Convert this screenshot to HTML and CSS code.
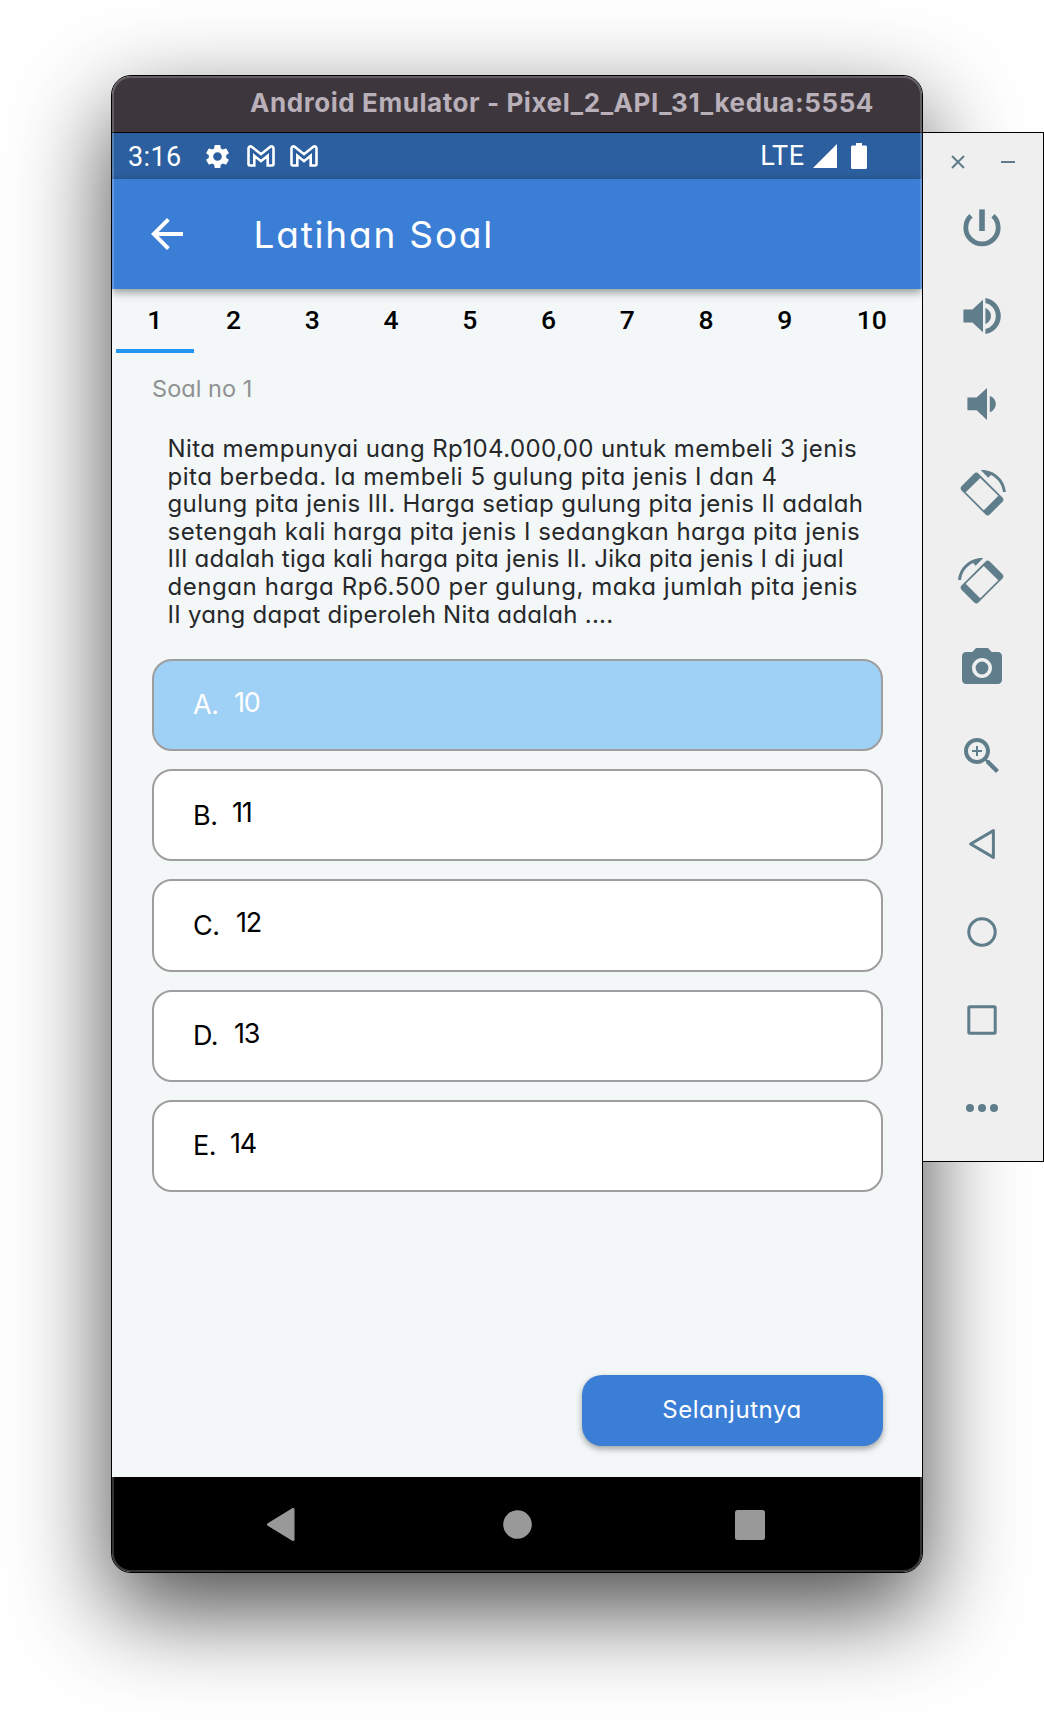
FILE: index.html
```html
<!DOCTYPE html>
<html lang="id">
<head>
<meta charset="utf-8">
<title>Latihan Soal</title>
<link rel="stylesheet" href="styles.css">
</head>
<body>
<main class="desktop">
  <section class="phone">
    <header class="titlebar">Android Emulator - Pixel_2_API_31_kedua:5554</header>
    <div class="status">
      <span class="clock">3:16</span>
      <svg class="gear" viewBox="0 0 24 24"><path d="M19.14 12.94c.04-.3.06-.61.06-.94 0-.32-.02-.64-.07-.94l2.03-1.58c.18-.14.23-.41.12-.61l-1.92-3.32c-.12-.22-.37-.29-.59-.22l-2.39.96c-.5-.38-1.03-.7-1.62-.94l-.36-2.54c-.04-.24-.24-.41-.48-.41h-3.84c-.24 0-.43.17-.47.41l-.36 2.54c-.59.24-1.13.57-1.62.94l-2.39-.96c-.22-.08-.47 0-.59.22L2.74 8.87c-.12.21-.08.47.12.61l2.03 1.58c-.05.3-.09.63-.09.94s.02.64.07.94l-2.03 1.58c-.18.14-.23.41-.12.61l1.92 3.32c.12.22.37.29.59.22l2.39-.96c.5.38 1.03.7 1.62.94l.36 2.54c.05.24.24.41.48.41h3.84c.24 0 .44-.17.47-.41l.36-2.54c.59-.24 1.13-.56 1.62-.94l2.39.96c.22.08.47 0 .59-.22l1.92-3.32c.12-.22.07-.47-.12-.61l-2.01-1.58zM12 15.6c-1.98 0-3.6-1.62-3.6-3.6s1.62-3.6 3.6-3.6 3.6 1.62 3.6 3.6-1.62 3.6-3.6 3.6z"/></svg>
      <svg class="mail" viewBox="0 0 28 22"><path d="M1.5 19V3.6C1.5 1.4 3.6.9 5 2l9 7.2L23 2c1.400-1.100 3.500-.6 3.500 1.600V19c0 .9-.6 1.500-1.500 1.500h-4.300V10.800L14 16.200l-6.700-5.400v9.700H3c-.9 0-1.500-.6-1.500-1.500z"/></svg>
      <svg class="mail" viewBox="0 0 28 22"><path d="M1.5 19V3.6C1.5 1.4 3.6.9 5 2l9 7.2L23 2c1.400-1.100 3.500-.6 3.500 1.600V19c0 .9-.6 1.500-1.500 1.500h-4.300V10.800L14 16.200l-6.700-5.400v9.700H3c-.9 0-1.500-.6-1.500-1.500z"/></svg>
      <span class="network">LTE</span>
      <svg class="signal" viewBox="0 0 24 24"><path d="M0 24H24V0z"/></svg>
      <svg class="battery" viewBox="0 0 16 26"><path d="M5 0h6v2.500h3.500c.8 0 1.500.7 1.500 1.500v20.500c0 .8-.7 1.500-1.500 1.500h-13C.7 26 0 25.300 0 24.500V4c0-.8.7-1.500 1.500-1.500H5z"/></svg>
    </div>
    <div class="appbar">
      <svg class="back" viewBox="0 0 24 24"><path d="M20 11H7.830l5.590-5.590L12 4l-8 8 8 8 1.410-1.410L7.830 13H20v-2z"/></svg>
      <h1>Latihan Soal</h1>
    </div>
    <nav class="tabs">
      <span class="tab active">1</span><span class="tab">2</span><span class="tab">3</span><span class="tab">4</span><span class="tab">5</span><span class="tab">6</span><span class="tab">7</span><span class="tab">8</span><span class="tab">9</span><span class="tab wide">10</span>
    </nav>
    <div class="content">
      <div class="label">Soal no 1</div>
      <p class="question">
        <span>Nita mempunyai uang Rp104.000,00 untuk membeli 3 jenis</span>
        <span>pita berbeda. Ia membeli 5 gulung pita jenis I dan 4</span>
        <span>gulung pita jenis III. Harga setiap gulung pita jenis II adalah</span>
        <span>setengah kali harga pita jenis I sedangkan harga pita jenis</span>
        <span>III adalah tiga kali harga pita jenis II. Jika pita jenis I di jual</span>
        <span>dengan harga Rp6.500 per gulung, maka jumlah pita jenis</span>
        <span>II yang dapat diperoleh Nita adalah ....</span>
      </p>
      <div class="options">
        <div class="option selected"><span class="key key-a">A.</span><span class="value">10</span></div>
        <div class="option"><span class="key key-b">B.</span><span class="value">11</span></div>
        <div class="option"><span class="key key-c">C.</span><span class="value">12</span></div>
        <div class="option"><span class="key key-d">D.</span><span class="value">13</span></div>
        <div class="option"><span class="key key-e">E.</span><span class="value">14</span></div>
      </div>
      <button class="next">Selanjutnya</button>
    </div>
    <footer class="navbar">
      <svg class="nav-back" viewBox="0 0 28 33"><path d="M26 1.500v30L1.500 16.500z"/></svg>
      <svg class="nav-home" viewBox="0 0 29 29"><circle cx="14.500" cy="14.500" r="14.300"/></svg>
      <svg class="nav-recent" viewBox="0 0 30 30"><rect width="30" height="30" rx="2.500"/></svg>
    </footer>
  </section>
  <aside class="tools">
    <div class="window-controls">
      <svg viewBox="0 0 14 14"><path d="M1 1l12 12M13 1L1 13"/></svg>
      <svg viewBox="0 0 14 14"><path d="M0 7h14"/></svg>
    </div>
    <div class="tool"><svg viewBox="0 0 24 24"><path class="line thick" d="M6.500 5.900a8.100 8.100 0 1 0 11 0"/><path d="M10.600 2.700h2.800v10.800h-2.800z"/></svg></div>
    <div class="tool"><svg viewBox="0 0 24 24"><path d="M2.700 8.700v6.500h4.500l5.300 4.900V3.900L7.200 8.700zM13.700 8c1.700.7 2.800 2.200 2.800 4s-1.100 3.300-2.800 4zM13.700 3v2.500c2.900.6 5.200 3.200 5.200 6.500s-2.300 5.900-5.200 6.500V21c4.300-.6 7.700-4.300 7.700-9s-3.400-8.400-7.700-9z"/></svg></div>
    <div class="tool"><svg viewBox="0 0 24 24"><path d="M4.700 8.700v6.400h4.600l5.200 4.900V4L9.300 8.700zM15.900 8c1.800.6 3 2.200 3 4s-1.200 3.500-3 4.100z"/></svg></div>
    <div class="tool rotate"><svg viewBox="0 0 24 24"><path d="M16.480 2.520c3.270 1.550 5.610 4.720 5.970 8.480h1.500C23.440 4.840 18.290 0 12 0l-.66.030 3.810 3.810 1.330-1.320z"/><path fill-rule="evenodd" d="M10.230 1.750c-.59-.59-1.540-.59-2.120 0L1.750 8.110c-.59.59-.59 1.540 0 2.120l12.020 12.020c.59.59 1.540.59 2.120 0l6.360-6.360c.59-.59.59-1.540 0-2.120zM11.100 3.950l9.050 8.950-7.250 7.250-9.050-9.050z"/></svg></div>
    <div class="tool rotate"><svg class="mirror" viewBox="0 0 24 24"><path d="M16.480 2.520c3.270 1.550 5.610 4.720 5.970 8.480h1.500C23.440 4.840 18.290 0 12 0l-.66.030 3.810 3.810 1.330-1.320z"/><path fill-rule="evenodd" d="M10.230 1.750c-.59-.59-1.540-.59-2.120 0L1.750 8.110c-.59.59-.59 1.540 0 2.120l12.020 12.020c.59.59 1.540.59 2.120 0l6.360-6.360c.59-.59.59-1.540 0-2.120zM11.100 3.950l9.050 8.950-7.250 7.250-9.050-9.050z"/></svg></div>
    <div class="tool"><svg viewBox="0 0 24 24"><circle cx="12" cy="12" r="3.200"/><path d="M9 2L7.170 4H4c-1.100 0-2 .9-2 2v12c0 1.100.9 2 2 2h16c1.100 0 2-.9 2-2V6c0-1.100-.9-2-2-2h-3.170L15 2H9zm3 15c-2.760 0-5-2.240-5-5s2.240-5 5-5 5 2.240 5 5-2.240 5-5 5z"/></svg></div>
    <div class="tool"><svg viewBox="0 0 24 24"><path d="M15.500 14h-.79l-.28-.27C15.410 12.590 16 11.110 16 9.500 16 5.910 13.090 3 9.500 3S3 5.910 3 9.500 5.910 16 9.500 16c1.610 0 3.090-.59 4.230-1.570l.27.280v.79l5 4.990L20.490 19l-4.990-5zm-6 0C7.010 14 5 11.990 5 9.500S7.010 5 9.500 5 14 7.010 14 9.500 11.990 14 9.500 14zM12 9h-2V7H9v2H7v1h2v2h1v-2h2z"/></svg></div>
    <div class="tool"><svg viewBox="0 0 24 24"><path class="line" d="M17.700 5.300v13.400L6.300 12z"/></svg></div>
    <div class="tool"><svg viewBox="0 0 24 24"><circle class="line" cx="12" cy="12" r="6.600"/></svg></div>
    <div class="tool"><svg viewBox="0 0 24 24"><rect class="line" x="5.400" y="5.400" width="13.200" height="13.200" rx=".5"/></svg></div>
    <div class="tool"><svg viewBox="0 0 24 24"><circle cx="6" cy="12" r="2"/><circle cx="12" cy="12" r="2"/><circle cx="18" cy="12" r="2"/></svg></div>
  </aside>
</main>
</body>
</html>
```
FILE: styles.css
```css
* { box-sizing: border-box; }
body { margin: 0; background: #fff; overflow: hidden; }
svg { display: block; fill: currentColor; flex: none; }

.desktop {
  display: flex;
  align-items: flex-start;
  height: 1720px;
  padding: 75px 0 0 111px;
  font-family: "Inter", "Liberation Sans", sans-serif;
  font-feature-settings: "cv11" 1;
}

.phone {
  position: relative;
  display: flex;
  flex-direction: column;
  flex: none;
  width: 812px;
  height: 1498px;
  border: 1px solid #000;
  border-radius: 20px;
  overflow: hidden;
  background: #f3f7f8;
  box-shadow: 0 36px 96px rgba(0, 0, 0, .72);
}
/* light rim along the window edge */
.phone::after {
  content: "";
  position: absolute;
  inset: 0;
  border: 2px solid rgba(255, 255, 255, .2);
  border-radius: 19px;
}

.titlebar {
  height: 57px;
  padding: 0 48px 4px 0;
  border-bottom: 1px solid #000;
  background: #3d363d;
  color: #b9b0b9;
  font-size: 26px;
  font-weight: 700;
  font-feature-settings: normal;
  line-height: 53px;
  letter-spacing: .57px;
  text-align: right;
  white-space: nowrap;
}

.status {
  display: flex;
  align-items: center;
  height: 46px;
  padding: 0 55px 0 16px;
  background: #2c5f9f;
  color: #fff;
  font: 27px/46px "Roboto", sans-serif;
}
.clock { width: 75px; padding-top: 1px; letter-spacing: .4px; }
.gear { width: 29px; height: 29px; margin-right: 14.500px; }
.mail { width: 28px; height: 22px; margin-right: 15.500px; fill: none; stroke: #fff; stroke-width: 2.600; }
.network { margin-left: auto; margin-right: 8px; letter-spacing: .8px; }
.signal { width: 24px; height: 24px; margin-right: 14px; }
.battery { width: 16px; height: 26px; }

.appbar {
  position: relative;
  display: flex;
  align-items: center;
  height: 110px;
  padding-left: 31px;
  background: #3b7ed6;
  color: #fff;
  box-shadow: 0 3px 9px rgba(0, 0, 0, .42);
}
.back { width: 48px; height: 48px; margin-right: 62.500px; }
.appbar h1 { margin: 0; font-size: 37px; font-weight: 400; letter-spacing: 1.800px; }

.tabs {
  display: flex;
  height: 64px;
  padding: 0 3.500px;
  font: 500 26.500px/63px "Roboto", sans-serif;
  text-align: center;
}
.tab { width: 78.750px; height: 64px; flex: none; line-height: 61px; }
.tab.active { border-bottom: 4px solid #2196f3; }
.tab.wide { width: 95px; }

.content {
  display: flex;
  flex-direction: column;
  flex: 1;
  padding: 22px 39.500px 31px 40px;
}
.label { color: #8f9193; font-size: 23.500px; line-height: 28px; letter-spacing: .05px; }
.question {
  margin: 32px 0 30.500px 15.500px;
  color: #26282a;
  font-size: 24px;
  line-height: 27.600px;
}
.question span { display: block; white-space: nowrap; letter-spacing: .41px; }
.question span:nth-child(2) { letter-spacing: .5px; }
.question span:nth-child(3) { letter-spacing: .38px; }
.question span:nth-child(4) { letter-spacing: .5px; }
.question span:nth-child(5) { letter-spacing: .25px; }
.question span:nth-child(6) { letter-spacing: .56px; }
.question span:nth-child(7) { letter-spacing: .26px; }

.options { display: flex; flex-direction: column; gap: 18px; }
.option {
  display: flex;
  align-items: center;
  height: 92.300px;
  flex: none;
  padding-left: 39px;
  border: 2px solid #9e9e9e;
  border-radius: 20px;
  background: #fff;
  color: #000;
  font-size: 27px;
}
.option.selected { background: #9fd0f6; color: #fff; }
.key { width: 41px; letter-spacing: -.5px; }
.key-b { width: 39px; }
.key-c { width: 43px; }
.key-e { width: 37px; }
.value { margin-bottom: 5px; letter-spacing: -1.200px; }

.next {
  width: 301px;
  height: 71px;
  flex: none;
  margin: auto 0 0 auto;
  padding: 0 0 2px;
  border: 0;
  border-radius: 20px;
  background: #3b7ed6;
  box-shadow: 0 3px 6px rgba(0, 0, 0, .35);
  color: #fff;
  font: 400 24px "Inter", sans-serif;
  font-feature-settings: "cv11" 1;
  letter-spacing: .55px;
}

.navbar {
  display: flex;
  align-items: center;
  height: 95px;
  padding: 0 157px 0 155px;
  justify-content: space-between;
  background: #000;
  color: #999;
}
.nav-back { width: 28px; height: 33px; stroke: #999; stroke-width: 3; stroke-linejoin: round; }
.nav-home { width: 29px; height: 29px; margin-left: 4px; }
.nav-recent { width: 30px; height: 30px; }

.tools {
  position: relative;
  flex: none;
  width: 121px;
  height: 1030px;
  margin-top: 57px;
  border: 1px solid #000;
  border-left: 0;
  background: #efefef;
  color: #607d8b;
}
.window-controls {
  display: flex;
  gap: 36px;
  height: 51px;
  padding: 22px 0 0 28px;
}
.window-controls svg { width: 14px; height: 14px; fill: none; stroke: currentColor; stroke-width: 2; }
.tool { display: flex; align-items: center; height: 88px; padding-left: 35px; }
.tool.rotate { padding-top: 3px; }
.tool svg { width: 48px; height: 48px; }
.tool .line { fill: none; stroke: currentColor; stroke-width: 1.500; stroke-linejoin: round; }
.tool .thick { stroke-width: 2.400; }
.mirror { transform: scaleX(-1); }
```
